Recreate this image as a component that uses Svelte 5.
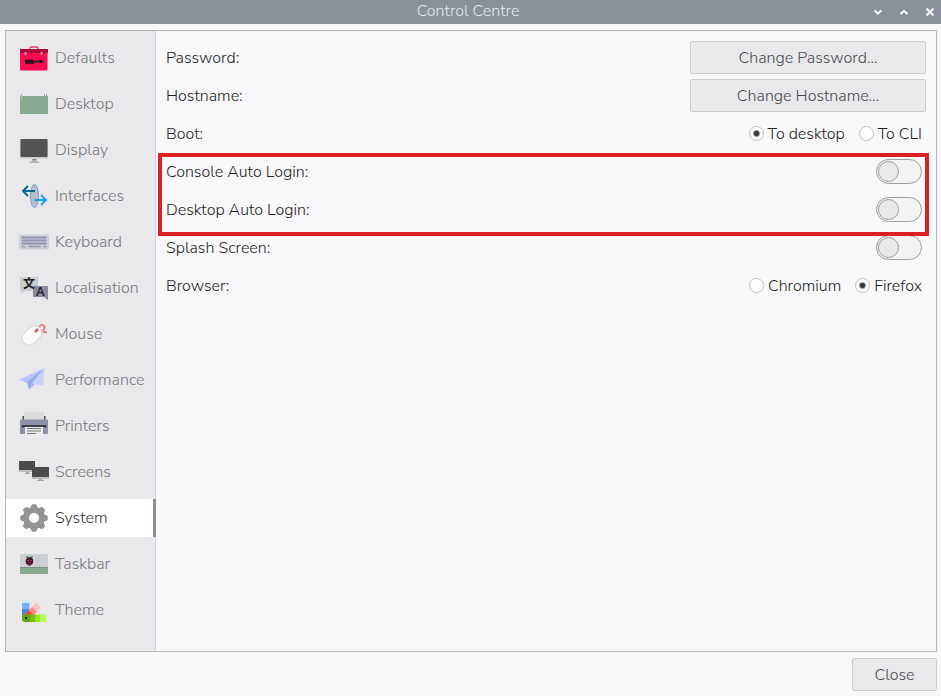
<script>
	let active = 'System'
	let boot = 'desktop'
	let browser = 'firefox'
	let consoleLogin = false
	let desktopLogin = false
	let splash = false

	const tabs = [
		'Defaults', 'Desktop', 'Display', 'Interfaces', 'Keyboard', 'Localisation', 'Mouse',
		'Performance', 'Printers', 'Screens', 'System', 'Taskbar', 'Theme'
	]
	const teeth = [0, 45, 90, 135, 180, 225, 270, 315]
</script>

<div class="window">
	<header>
		<h1>Control Centre</h1>
		<div class="window-buttons">
			<button aria-label="Minimise"><svg viewBox="0 0 12 12"><path d="M2.5 4.5 6 7.5l3.5-3" /></svg></button>
			<button aria-label="Maximise"><svg viewBox="0 0 12 12"><path d="M2.5 8 6 5l3.5 3" /></svg></button>
			<button aria-label="Close window"><svg viewBox="0 0 12 12"><path d="m2.5 2.5 7 7m0-7-7 7" /></svg></button>
		</div>
	</header>

	<main>
		<nav>
			{#each tabs as tab}
				<button class="tab" class:active={active === tab} on:click={() => active = tab}>
					<svg viewBox="0 0 32 32" aria-hidden="true">
						{#if tab === 'Defaults'}
							<path d="M12 8V6q0-1 1-1h6q1 0 1 1v2" fill="none" stroke="#e6386a" stroke-width="1.3" />
							<rect x="2" y="10" width="27.5" height="18.5" rx="1" fill="#ff0a50" />
							<rect x="2" y="7" width="28" height="4" fill="#ad0939" />
							<path d="M7.5 10v3m16-3v3" stroke="#e3a8b9" stroke-width="1.8" />
							<rect x="7" y="17.5" width="9" height="4.5" rx="1" fill="#35121d" />
							<path d="M15 19.5h8" stroke="#35121d" stroke-width="1.5" />
							<path d="M21 18h3l2 1.5-2 1.5h-3z" fill="#35121d" />
						{:else if tab === 'Desktop'}
							<rect x="2" y="8" width="28" height="18" fill="#86a98f" />
							<path d="M3.5 6v2m23-2v2m2-2v2" stroke="#9eabb3" />
							<path d="M3.5 8v4" stroke="#c5d4ca" stroke-dasharray="1 1" />
						{:else if tab === 'Display'}
							<rect x="2" y="5" width="28" height="19.5" rx="1" fill="#c7c7c7" />
							<rect x="2.5" y="5" width="27" height="18" rx="1" fill="#535353" />
							<path d="M14 25h4.500v2.500H21V29H11.500v-1.500H14z" fill="#b2b2b2" />
							<path d="M14 25h4.500v1H14z" fill="#858585" />
						{:else if tab === 'Interfaces'}
							<ellipse cx="16.500" cy="16" rx="4" ry="11.500" fill="#b1bdcd" stroke="#839dc4" />
							<path d="M17 11H5m5-5-5 5 5 5" fill="none" stroke="#0b6698" stroke-width="2" />
							<path d="M16.5 20H28m-5-5 5 5-5 5" fill="none" stroke="#189ff0" stroke-width="2" />
						{:else if tab === 'Keyboard'}
							<rect x="1" y="8.5" width="30" height="15" rx="1" fill="#ced1d7" />
							<path d="M3.5 11.5h25m-25 3h25m-25 3h25" stroke="#9193b1" stroke-width="1.8" />
							<path d="M3.5 20.5h3m4 0h12m3 0h3" stroke="#9193b1" stroke-width="1.5" />
							<path d="M6 21h2" stroke="#d99096" />
						{:else if tab === 'Localisation'}
							<path d="M2 5h18v14H7l-3.5 3V19H2z" fill="#c8ccce" />
							<path d="M15 14h15v14l-4-3H15z" fill="#8c8b9d" />
							<text x="5" y="16" font-size="12" class="cjk">文</text>
							<text x="18" y="24" font-size="13">A</text>
						{:else if tab === 'Mouse'}
							<path d="m17 14 3-3c1-1 1-3 3-4s5 2 3 4-1 4 3 3" fill="none" stroke="#ef777b" stroke-width="1.7" />
							<rect x="7" y="6.5" width="14" height="22" rx="7" transform="rotate(46 14 17.5)" fill="#fcfcfc" stroke="#d4d4d4" />
							<path d="m17 14 3-3" stroke="#e8555d" stroke-width="2.5" />
						{:else if tab === 'Performance'}
							<path d="M1 15.5 26.5 4 9 19z" fill="#b8c3ff" />
							<path d="M26.5 4 25 22l-11-3z" fill="#c8d1ff" />
							<path d="M26.5 4 9 18l2 8 3-7z" fill="#98a6ef" />
							<path d="m11 26 3-7 3 1z" fill="#aab6f7" />
						{:else if tab === 'Printers'}
							<path d="M4.500 10V6h3v4m17 0V6h3v4" fill="#4f4f54" />
							<rect x="6" y="2" width="20" height="10" fill="#dcdcdc" />
							<path d="M2 10.5q0-1 1-1h26q1 0 1 1V23q0 1-1 1H2z" fill="#8d90a6" />
							<path d="M4.5 17.5V16h23v1.5" fill="none" stroke="#252529" stroke-width="1.5" />
							<rect x="7" y="17" width="18" height="11" fill="#ededed" />
							<path d="M9 18.5h14M9 21h14M9 23.5h9" stroke="#77747b" />
						{:else if tab === 'Screens'}
							<rect x="1" y="5" width="16" height="11" fill="#bdbdbd" />
							<rect x="1" y="5" width="16" height="9" fill="#4c4c4c" />
							<path d="M8 16h3v1h1v1H7v-1h1z" fill="#aaa" />
							<rect x="14" y="11" width="17" height="12" fill="#bdbdbd" />
							<rect x="14" y="11" width="17" height="10" fill="#4c4c4c" />
							<path d="M21 23h3v1h2v1h-7v-1h2z" fill="#aaa" />
						{:else if tab === 'System'}
							<circle cx="16" cy="16" r="8" fill="none" stroke="#949494" stroke-width="6" />
							{#each teeth as angle}
								<path d="M12 7 13.5 3q.3-.7 1-.7h3q.7 0 1 .7L20 7z" fill="#949494" transform="rotate({angle} 16 16)" />
							{/each}
						{:else if tab === 'Taskbar'}
							<rect x="2" y="6" width="28" height="13" fill="#ccd0d4" />
							<rect x="2" y="19" width="28" height="7" fill="#86a98f" />
							<path d="M2 19.5h28" stroke="#74917f" />
							<path d="m8 8 3.5 1L15 8l-1 3H9z" fill="#367742" />
							<path d="M11.5 10c4-1 4.5 3.5 3 6l-3 2-3-2C7 13.5 7.5 9 11.5 10z" fill="#42152a" />
							<path d="M9 12.500h2m1 0h2m-4 2h3m-3 2h1m1 0h1" stroke="#b72b5d" />
							<path d="M20 8v10" stroke="#b5bbc0" stroke-dasharray="1 1" />
						{:else}
							<rect x="4" y="6" width="7.5" height="5" fill="#cbe9ff" />
							<rect x="4" y="9" width="7.5" height="7" fill="#78adfa" />
							<rect x="4" y="15" width="7.5" height="8" fill="#4285e8" />
							<g transform="rotate(-45 8 24)">
								<path d="M8 20.5h8v7H8z" fill="#ff4619" />
								<path d="M15 20.5h6v7h-6z" fill="#ff8989" />
								<path d="M20 20.5h6v7h-6z" fill="#ffc0c0" />
							</g>
							<path d="M4 20.5h9V28H7q-3 0-3-3z" fill="#65a414" />
							<path d="M12 20.5h5V28h-5z" fill="#79bf0d" />
							<path d="M17 20.5h6V28h-6z" fill="#96e51d" />
							<path d="M22 20.5h6V28h-6z" fill="#b3ff46" />
							<circle cx="8" cy="24" r="1.2" fill="#173d0b" />
						{/if}
					</svg>
					{tab}
				</button>
			{/each}
		</nav>

		<form>
			<div class="row">
				<span>Password:</span>
				<button type="button" class="push wide">Change Password...</button>
			</div>
			<div class="row">
				<span>Hostname:</span>
				<button type="button" class="push wide">Change Hostname...</button>
			</div>
			<div class="row" role="radiogroup" aria-labelledby="boot">
				<span id="boot">Boot:</span>
				<div class="choices">
					<label><input type="radio" name="boot" value="desktop" bind:group={boot}>To desktop</label>
					<label><input type="radio" name="boot" value="cli" bind:group={boot}>To CLI</label>
				</div>
			</div>
			<div class="marked">
				<div class="row">
					<label for="console">Console Auto Login:</label>
					<input id="console" type="checkbox" bind:checked={consoleLogin}>
				</div>
				<div class="row">
					<label for="desktop">Desktop Auto Login:</label>
					<input id="desktop" type="checkbox" bind:checked={desktopLogin}>
				</div>
			</div>
			<div class="row">
				<label for="splash">Splash Screen:</label>
				<input id="splash" type="checkbox" bind:checked={splash}>
			</div>
			<div class="row" role="radiogroup" aria-labelledby="browser">
				<span id="browser">Browser:</span>
				<div class="choices">
					<label><input type="radio" name="browser" value="chromium" bind:group={browser}>Chromium</label>
					<label><input type="radio" name="browser" value="firefox" bind:group={browser}>Firefox</label>
				</div>
			</div>
		</form>
	</main>

	<footer>
		<button class="push">Close</button>
	</footer>
</div>

<style>
	:global(body) {
		background: #f8f8fa;
	}

	.window, button {
		font-family: "Nunito Sans", Nunito, "Open Sans", sans-serif;
		font-size: 16px;
		font-weight: 300;
		line-height: 22px;
	}

	.window {
		display: flex;
		flex-direction: column;
		box-sizing: border-box;
		min-height: 100vh;
		color: #1d1f23;
	}

	header {
		display: grid;
		grid-template-columns: 1fr auto 1fr;
		height: 24px;
		padding-right: 5px;
		background: #87919b;
		color: #e3e8ee;
	}

	h1 {
		grid-column: 2;
		margin: 0;
		font-size: 16px;
		font-weight: 300;
		line-height: 22px;
	}

	.window-buttons {
		display: flex;
		justify-content: flex-end;
		gap: 14px;
	}

	.window-buttons button {
		width: 12px;
		padding: 0;
		border: 0;
		background: none;
	}

	.window-buttons svg {
		display: block;
		width: 12px;
		height: 12px;
		fill: none;
		stroke: #f3f6f9;
		stroke-width: 2.2;
	}

	main {
		display: flex;
		flex: 1;
		margin: 6px 4px 6px 5px;
		border: 1px solid #b2b4b6;
	}

	nav {
		display: flex;
		flex-direction: column;
		gap: 8px;
		box-sizing: border-box;
		width: 150px;
		padding: 8px 0;
		border-right: 1px solid #cccdd0;
		background: #e9e9eb;
	}

	.tab {
		display: flex;
		align-items: center;
		gap: 5px;
		height: 38px;
		margin-right: -1px;
		padding: 0 0 0 12px;
		border: 0;
		border-right: 3px solid transparent;
		background: none;
		color: #77787b;
	}

	.tab.active {
		border-color: #87919b;
		background: #fff;
		color: #333538;
	}

	.tab svg {
		flex: none;
		width: 32px;
		height: 32px;
	}

	.tab text {
		fill: #202024;
		font-family: "Open Sans", sans-serif;
		font-weight: 600;
	}

	.tab .cjk {
		font-family: "Noto Sans CJK JP", sans-serif;
		font-weight: 700;
	}

	form {
		flex: 1;
		padding: 8px 10px;
	}

	.row {
		display: flex;
		align-items: center;
		justify-content: space-between;
		height: 38px;
	}

	.push {
		box-sizing: border-box;
		width: 85px;
		height: 33px;
		padding: 0;
		border: 1px solid #ccccce;
		border-radius: 2px;
		background: #e9e9eb;
		color: #484a4e;
	}

	.push.wide {
		width: 236px;
		margin-bottom: 1px;
		padding-top: 1px;
	}

	.choices {
		display: flex;
		gap: 14px;
		margin-right: 4px;
	}

	.choices label {
		display: flex;
		align-items: center;
		gap: 4px;
	}

	input {
		appearance: none;
		box-sizing: border-box;
		margin: 0 0 1px;
	}

	input[type="radio"] {
		width: 15px;
		height: 15px;
		border: 1px solid #bfc0c2;
		border-radius: 50%;
		background: #fff;
	}

	input[type="radio"]:checked {
		background: radial-gradient(circle, #35373b 2px, #fff 4px);
	}

	input[type="checkbox"] {
		display: flex;
		width: 46px;
		height: 25px;
		margin-right: 4px;
		padding: 1px;
		border: 1px solid #9d9d9e;
		border-radius: 13px;
		background: #f3f3f4;
	}

	input[type="checkbox"]::before {
		content: "";
		box-sizing: border-box;
		width: 21px;
		height: 21px;
		border: 1px solid #9d9d9e;
		border-radius: 50%;
		background: #e9e9eb;
	}

	input[type="checkbox"]:checked {
		justify-content: flex-end;
		background: #87919b;
	}

	.marked {
		position: relative;
	}

	.marked::after {
		content: "";
		position: absolute;
		inset: 0 -3px -7px -8px;
		border: 4px solid #db2023;
		pointer-events: none;
	}

	footer {
		display: flex;
		justify-content: flex-end;
		padding: 0 4px 5px;
	}
</style>
